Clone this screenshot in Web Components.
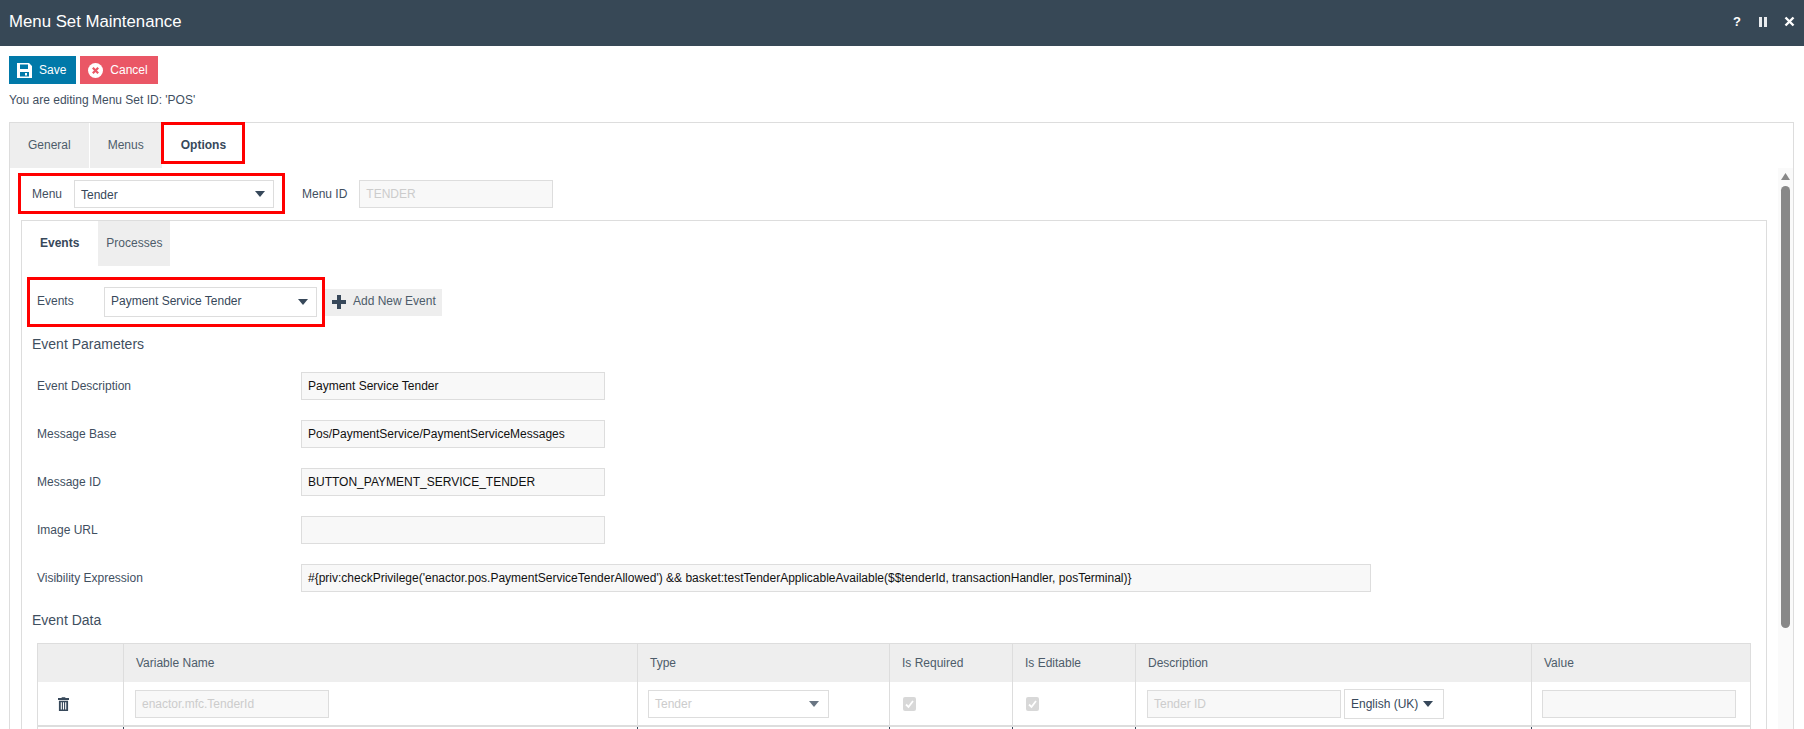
<!DOCTYPE html>
<html>
<head>
<meta charset="utf-8">
<title>Menu Set Maintenance</title>
<style>
  html, body { margin: 0; height: 100%; overflow: hidden; background: #fff; }
  body { font: 12px "Liberation Sans", Arial, sans-serif; color: #3f4f5f; }
</style>
</head>
<body>
<menu-set-page></menu-set-page>

<script>
const ARROW = '<svg width="10" height="6" viewBox="0 0 10 6"><path d="M0 0h10L5 6z" fill="#37485a"/></svg>';

class TitleBar extends HTMLElement {
  constructor() {
    super();
    this.attachShadow({ mode: 'open' }).innerHTML = `
      <style>
        :host { display: flex; align-items: center; justify-content: space-between; height: 46px; padding: 0 9px 3px; box-sizing: border-box; background: #374856; color: #fff; }
        .title { font-size: 16.800px; }
        .actions { display: flex; align-items: center; gap: 14px; font-size: 13px; font-weight: bold; }
        .actions > * { display: flex; width: 12px; justify-content: center; }
        svg { display: block; }
      </style>
      <div class="title"><slot></slot></div>
      <div class="actions">
        <span>?</span>
        <span><svg width="8" height="10" viewBox="0 0 8 10"><path d="M0 0h3v10H0zM5 0h3v10H5z" fill="#e8ebee"/></svg></span>
        <span><svg width="11" height="11" viewBox="0 0 11 11"><path d="M1.500 1.500l8 8M9.500 1.500l-8 8" stroke="#fff" stroke-width="2.400"/></svg></span>
      </div>`;
  }
}

class ToolButton extends HTMLElement {
  constructor() {
    super();
    this.attachShadow({ mode: 'open' }).innerHTML = `
      <style>
        :host { display: inline-flex; align-items: center; height: 28px; padding: 0 10px 0 8px; gap: 7px; box-sizing: border-box; color: #fff; background: #0079a9; }
        :host([kind="cancel"]) { background: #ea5766; }
        ::slotted(svg) { display: block; }
      </style>
      <slot name="icon"></slot><slot></slot>`;
  }
}

class TabItem extends HTMLElement {
  constructor() {
    super();
    this.attachShadow({ mode: 'open' }).innerHTML = `
      <style>
        :host { position: relative; display: flex; align-items: center; box-sizing: border-box; height: 100%; padding: 0 var(--pad, 18px) 2px; background: #eee; color: #4d5c6a; border-right: 1px solid #fff; }
        :host([active]) { background: #fff; color: #37485a; font-weight: bold; }
        /* annotation frame drawn over the tab */
        :host([marked])::after { content: ""; position: absolute; left: -2px; right: -1px; top: -1px; bottom: 4px; border: 3px solid #f00; }
      </style>
      <slot></slot>`;
  }
}

class MarkBox extends HTMLElement {
  constructor() {
    super();
    this.attachShadow({ mode: 'open' }).innerHTML = `
      <style>
        :host { display: flex; align-items: center; box-sizing: border-box; border: 3px solid #f00; }
      </style>
      <slot></slot>`;
  }
}

class TextField extends HTMLElement {
  constructor() {
    super();
    this.attachShadow({ mode: 'open' }).innerHTML = `
      <style>
        :host { display: flex; align-items: center; flex: none; box-sizing: border-box; height: 28px; padding: 0 6px; border: 1px solid #ddd; background: #f8f8f8; color: #111; white-space: nowrap; overflow: hidden; }
        :host([disabled]) { color: #ccc; }
      </style>
      <slot></slot>`;
  }
}

class SelectField extends HTMLElement {
  constructor() {
    super();
    this.attachShadow({ mode: 'open' }).innerHTML = `
      <style>
        :host { display: flex; align-items: center; justify-content: space-between; flex: none; box-sizing: border-box; height: 28px; padding: 0 8px 0 6px; border: 1px solid #ddd; background: #fff; color: #37485a; white-space: nowrap; }
        :host([disabled]) { color: #ccc; }
        :host([disabled]) svg { opacity: .75; }
        svg { display: block; }
      </style>
      <slot></slot>${ARROW}`;
  }
}

class FieldRow extends HTMLElement {
  constructor() {
    super();
    this.attachShadow({ mode: 'open' }).innerHTML = `
      <style>
        :host { display: grid; grid-template-columns: 264px auto; justify-content: start; align-items: center; padding-left: 15px; margin-bottom: 20px; }
      </style>
      <span>${this.getAttribute('label') || ''}</span><slot></slot>`;
  }
}

class SectionTitle extends HTMLElement {
  constructor() {
    super();
    this.attachShadow({ mode: 'open' }).innerHTML = `
      <style>
        :host { display: block; height: 18px; line-height: 18px; padding-left: 10px; font-size: 14px; color: #3f4f5f; }
      </style>
      <slot></slot>`;
  }
}

class DisabledCheck extends HTMLElement {
  constructor() {
    super();
    this.attachShadow({ mode: 'open' }).innerHTML = `
      <style>
        :host { display: block; width: 13px; height: 14px; border-radius: 2px; background: #d8d8d8; }
        svg { display: block; }
      </style>
      <svg width="13" height="14" viewBox="0 0 13 14"><path d="M3 7.500l2.500 2.500L10 4" fill="none" stroke="#fff" stroke-width="1.800"/></svg>`;
  }
}

class EventDataTable extends HTMLElement {
  constructor() {
    super();
    this.attachShadow({ mode: 'open' }).innerHTML = `
      <style>
        :host { display: block; margin: 14px 15px 0; }
        table { width: 100%; table-layout: fixed; border-collapse: separate; border-spacing: 0; border: 1px solid #ddd; border-bottom: 0; }
        th { height: 38px; padding: 0 0 0 12px; box-sizing: border-box; background: #eee; font-weight: normal; text-align: left; color: #4d5c6a; }
        th + th, td + td { border-left: 1px solid #ddd; }
        td { height: 45px; padding: 0 0 0 10px; box-sizing: border-box; border-bottom: 2px solid #ddd; }
        .cell { display: flex; align-items: center; gap: 3px; }
        .check { padding-left: 3px; }
        .trash { padding-left: 10px; }
        .next td { height: 20px; border-bottom: 0; }
        .next td + td { border-left-color: #37485a; }
        svg { display: block; }
      </style>
      <table>
        <colgroup>
          <col style="width:85px"><col style="width:514px"><col style="width:252px"><col style="width:123px"><col style="width:123px"><col style="width:396px"><col>
        </colgroup>
        <thead>
          <tr><th></th><th>Variable Name</th><th>Type</th><th>Is Required</th><th>Is Editable</th><th>Description</th><th>Value</th></tr>
        </thead>
        <tbody>
          <tr>
            <td><div class="cell trash">
              <svg width="11" height="14" viewBox="0 0 12 15"><path d="M4 0h4v1h4v2H0V1h4zM1 4h10v11H1zM3 5.500v8h1.200v-8zM5.400 5.500v8h1.200v-8zM7.800 5.500v8H9v-8z" fill="#37485a" fill-rule="evenodd"/></svg>
            </div></td>
            <td><div class="cell" style="padding-left:1px"><text-field disabled style="width:194px">enactor.mfc.TenderId</text-field></div></td>
            <td><div class="cell"><select-field disabled style="width:181px;padding-right:9px">Tender</select-field></div></td>
            <td><div class="cell check"><disabled-check></disabled-check></div></td>
            <td><div class="cell check"><disabled-check></disabled-check></div></td>
            <td><div class="cell" style="padding-left:1px"><text-field disabled style="width:194px">Tender ID</text-field><select-field style="width:100px;height:30px;padding-right:10px">English (UK)</select-field></div></td>
            <td><div class="cell" style="padding-left:0"><text-field style="width:194px"></text-field></div></td>
          </tr>
          <tr class="next"><td></td><td></td><td></td><td></td><td></td><td></td><td></td></tr>
        </tbody>
      </table>`;
  }
}

class EventsPanel extends HTMLElement {
  constructor() {
    super();
    this.attachShadow({ mode: 'open' }).innerHTML = `
      <style>
        :host { display: block; margin: 6px 0 0 11px; border: 1px solid #ddd; border-bottom: 0; }
        .tabs { display: flex; height: 45px; }
        .picker { display: flex; align-items: center; margin: 11px 0 0 5px; }
        .add { display: flex; align-items: center; height: 27px; padding: 0 6px 0 7px; gap: 7px; background: #eee; color: #4d5c6a; }
        .add svg { display: block; }
        .add span { margin-bottom: 3px; }
        section-title.first { margin-top: 8px; margin-bottom: 19px; }
        section-title.second { margin-top: -1px; }
      </style>
      <div class="tabs">
        <tab-item active style="--pad:18px">Events</tab-item>
        <tab-item style="--pad:8px">Processes</tab-item>
      </div>
      <div class="picker">
        <mark-box style="width:298px;height:50px;padding:0 5px 2px 7px;justify-content:space-between">
          <span>Events</span>
          <select-field style="width:213px;height:30px;margin-top:2px"><span style="margin-bottom:2px">Payment Service Tender</span></select-field>
        </mark-box>
        <div class="add">
          <svg width="14" height="14" viewBox="0 0 14 14"><path d="M5 0h4v5h5v4H9v5H5V9H0V5h5z" fill="#37485a"/></svg>
          <span>Add New Event</span>
        </div>
      </div>
      <section-title class="first">Event Parameters</section-title>
      <field-row label="Event Description"><text-field style="width:304px">Payment Service Tender</text-field></field-row>
      <field-row label="Message Base"><text-field style="width:304px">Pos/PaymentService/PaymentServiceMessages</text-field></field-row>
      <field-row label="Message ID"><text-field style="width:304px">BUTTON_PAYMENT_SERVICE_TENDER</text-field></field-row>
      <field-row label="Image URL"><text-field style="width:304px"></text-field></field-row>
      <field-row label="Visibility Expression"><text-field style="width:1070px">#{priv:checkPrivilege('enactor.pos.PaymentServiceTenderAllowed') &amp;&amp; basket:testTenderApplicableAvailable($$tenderId, transactionHandler, posTerminal)}</text-field></field-row>
      <section-title class="second">Event Data</section-title>
      <event-data-table></event-data-table>`;
  }
}

class FakeScrollbar extends HTMLElement {
  constructor() {
    super();
    this.attachShadow({ mode: 'open' }).innerHTML = `
      <style>
        :host { display: flex; flex-direction: column; align-items: center; flex: none; width: 15px; padding-top: 5px; box-sizing: border-box; background: #fafafa; }
        .thumb { width: 9px; height: 442px; margin-top: 6px; border-radius: 5px; background: #888; }
        svg { display: block; }
      </style>
      <svg width="9" height="7" viewBox="0 0 9 7"><path d="M4.500 0L9 7H0z" fill="#888"/></svg>
      <div class="thumb"></div>`;
  }
}

class MenuSetPage extends HTMLElement {
  constructor() {
    super();
    this.attachShadow({ mode: 'open' }).innerHTML = `
      <style>
        :host { display: flex; flex-direction: column; height: 100vh; overflow: hidden; }
        .actions { display: flex; gap: 4px; padding: 10px 9px 0; }
        .note { height: 14px; line-height: 14px; margin: 9px 9px 0; }
        .panel { flex: 1; min-height: 0; display: flex; flex-direction: column; margin: 15px 10px 0 9px; border: 1px solid #ddd; border-bottom: 0; }
        .tabs { display: flex; flex: none; height: 45px; }
        .body { flex: 1; min-height: 0; display: flex; gap: 11px; }
        .content { flex: 1; min-width: 0; }
        .menu-row { display: flex; align-items: center; height: 41px; margin: 5px 0 0 8px; }
        .menu-id { display: flex; align-items: center; margin-left: 17px; gap: 12px; }
        svg { display: block; }
      </style>
      <title-bar>Menu Set Maintenance</title-bar>
      <div class="actions">
        <tool-button>
          <svg slot="icon" width="15" height="15" viewBox="0 0 15 15"><path d="M0 0h12l3 3v12H0zM3 1.500v4.500h8V1.500zM3 9v4.500h9V9zM8 10h2v2.500H8z" fill="#fff" fill-rule="evenodd"/></svg>
          Save
        </tool-button>
        <tool-button kind="cancel">
          <svg slot="icon" width="15" height="15" viewBox="0 0 15 15"><circle cx="7.500" cy="7.500" r="7.500" fill="#fff"/><path d="M4.800 4.800l5.400 5.400M10.200 4.800l-5.400 5.400" stroke="#ea5766" stroke-width="2.200"/></svg>
          Cancel
        </tool-button>
      </div>
      <div class="note">You are editing Menu Set ID: 'POS'</div>
      <div class="panel">
        <div class="tabs">
          <tab-item>General</tab-item>
          <tab-item>Menus</tab-item>
          <tab-item active marked>Options</tab-item>
        </div>
        <div class="body">
          <div class="content">
            <div class="menu-row">
              <mark-box style="width:267px;height:41px;padding:0 8px 0 11px;justify-content:space-between">
                <span>Menu</span>
                <select-field style="width:200px"><span style="margin-top:2px">Tender</span></select-field>
              </mark-box>
              <div class="menu-id">
                <span>Menu ID</span>
                <text-field disabled style="width:194px">TENDER</text-field>
              </div>
            </div>
            <events-panel></events-panel>
          </div>
          <fake-scrollbar></fake-scrollbar>
        </div>
      </div>`;
  }
}

customElements.define('title-bar', TitleBar);
customElements.define('tool-button', ToolButton);
customElements.define('tab-item', TabItem);
customElements.define('mark-box', MarkBox);
customElements.define('text-field', TextField);
customElements.define('select-field', SelectField);
customElements.define('field-row', FieldRow);
customElements.define('section-title', SectionTitle);
customElements.define('disabled-check', DisabledCheck);
customElements.define('event-data-table', EventDataTable);
customElements.define('events-panel', EventsPanel);
customElements.define('fake-scrollbar', FakeScrollbar);
customElements.define('menu-set-page', MenuSetPage);
</script>
</body>
</html>
